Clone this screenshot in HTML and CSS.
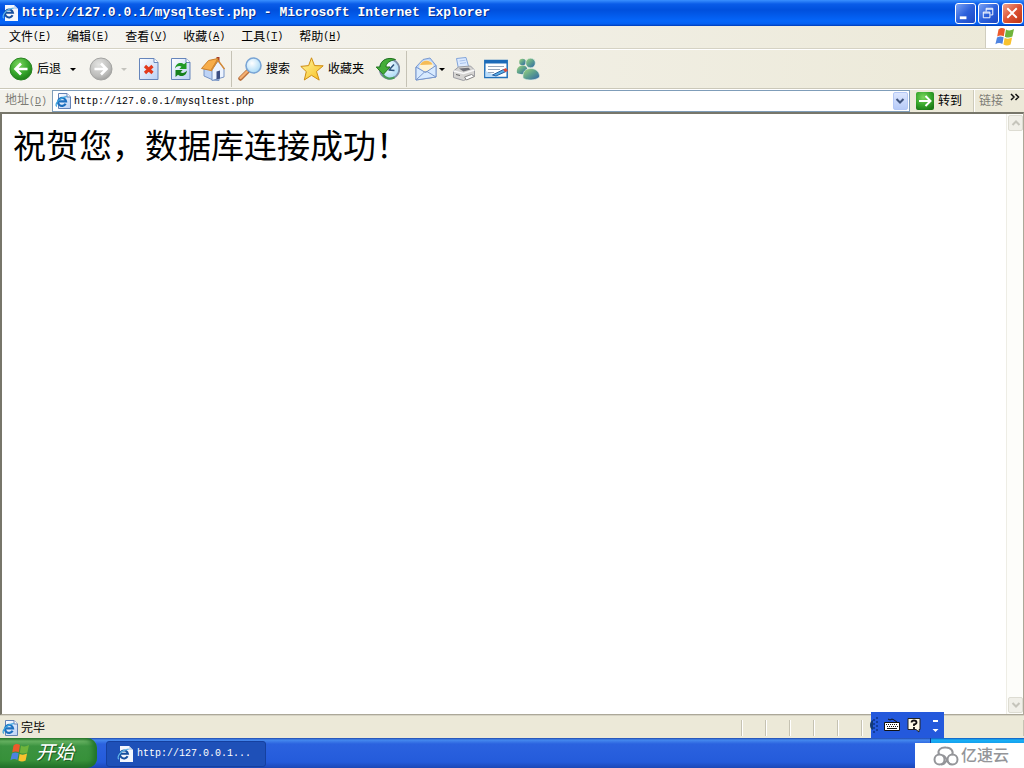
FILE: index.html
```html
<!DOCTYPE html>
<html lang="zh-CN">
<head>
<meta charset="utf-8">
<title>http://127.0.0.1/mysqltest.php - Microsoft Internet Explorer</title>
<link rel="stylesheet" href="styles.css">
</head>
<body>
<svg class="defs" aria-hidden="true">
  <defs>
    <linearGradient id="paper" x1="0" y1="0" x2="1" y2="1"><stop offset="0" stop-color="#fff"/><stop offset="1" stop-color="#b9d0f5"/></linearGradient>
    <radialGradient id="green" cx=".4" cy=".3" r=".75"><stop offset="0" stop-color="#7cd65f"/><stop offset=".6" stop-color="#35a52a"/><stop offset="1" stop-color="#1c7a17"/></radialGradient>
    <radialGradient id="grey" cx=".4" cy=".3" r=".75"><stop offset="0" stop-color="#e4e4e2"/><stop offset=".7" stop-color="#bcbcba"/><stop offset="1" stop-color="#9c9c9a"/></radialGradient>
    <radialGradient id="glass" cx=".4" cy=".35" r=".7"><stop offset="0" stop-color="#fff"/><stop offset="1" stop-color="#a5d8f6"/></radialGradient>
    <linearGradient id="star" x1="0" y1="0" x2="1" y2="1"><stop offset="0" stop-color="#fff7a0"/><stop offset="1" stop-color="#f8bd1c"/></linearGradient>
    <linearGradient id="person" x1="0" y1="0" x2="1" y2="1"><stop offset="0" stop-color="#a3d67d"/><stop offset=".5" stop-color="#5b9f8e"/><stop offset="1" stop-color="#2f62a8"/></linearGradient>
    <symbol id="ie" viewBox="0 0 16 16">
      <path d="M3.500 .5h8.500l3.500 3.500v11.500h-12z" fill="url(#paper)" stroke="#6482b5"/>
      <path d="M12 .5v3.500h3.500" fill="#fff" stroke="#6482b5"/>
      <path d="M10.600 10.800A4 4 0 1 1 11 8.300H3.800" fill="none" stroke="#1d6fbe" stroke-width="2.200"/>
      <path d="M1.800 13.500C-.8 11.500 4 4.500 11.800 3.600" fill="none" stroke="#3ca3dd" stroke-width="1.300"/>
    </symbol>
    <symbol id="ie-light" viewBox="0 0 16 16">
      <path d="M3 0h9l4 4v12H3z" fill="#f4f7fd"/>
      <path d="M12 0v4h4" fill="#c9d6ec"/>
      <path d="M10.600 10.300A4 4 0 1 1 11 7.800H3.800" fill="none" stroke="#164f9d" stroke-width="2"/>
      <path d="M1.800 13.200C-.8 11 4 4 11.800 3.200" fill="none" stroke="#5fb4ea" stroke-width="1.200"/>
    </symbol>
    <symbol id="flag" viewBox="0 0 20 20">
      <path d="M3.500 2.500Q6.500 0 10 2L8.800 9.200Q5.500 7.500 2.200 9.400z" fill="#ec5a2b"/>
      <path d="M11 2.500Q14.500 4.500 19 2L17.400 9.500Q13.500 11.500 9.800 9.700z" fill="#6fb43b"/>
      <path d="M2 10.400Q5.200 8.600 8.600 10.300L7.400 17Q4 15 .4 17.200z" fill="#4d83e0"/>
      <path d="M9.600 10.900Q13 12.700 17.100 10.600L15.600 17.600Q12 19.600 8.400 17.600z" fill="#f8c22e"/>
    </symbol>
  </defs>
</svg>

<div class="window">
  <header class="titlebar">
    <svg class="ico16"><use href="#ie-light"/></svg>
    <span class="title">http://127.0.0.1/mysqltest.php - Microsoft Internet Explorer</span>
    <button class="winbtn" aria-label="最小化"><svg viewBox="0 0 20 20"><path d="M4 14.500h7" stroke="#fff" stroke-width="3"/></svg></button>
    <button class="winbtn" aria-label="还原"><svg viewBox="0 0 20 20" fill="none" stroke="#fff"><path d="M7.500 8V4.500h7v7H12M7.500 5.500h7M4.500 9.500h7"/><path d="M4.500 8.500h7v6h-7z"/></svg></button>
    <button class="winbtn close" aria-label="关闭"><svg viewBox="0 0 20 20"><path d="M4.500 4.500l10 10M14.500 4.500l-10 10" stroke="#fff" stroke-width="2"/></svg></button>
  </header>

  <div class="menurow">
    <nav class="menus">
      <button>文件<span class="key">(<u>F</u>)</span></button>
      <button>编辑<span class="key">(<u>E</u>)</span></button>
      <button>查看<span class="key">(<u>V</u>)</span></button>
      <button>收藏<span class="key">(<u>A</u>)</span></button>
      <button>工具<span class="key">(<u>T</u>)</span></button>
      <button>帮助<span class="key">(<u>H</u>)</span></button>
    </nav>
    <div class="brand"><svg class="ico20"><use href="#flag"/></svg></div>
  </div>

  <div class="toolbar">
    <div class="group nav">
      <button class="tool"><svg class="ico24" viewBox="0 0 24 24"><circle cx="12" cy="12" r="11" fill="url(#green)" stroke="#2b8423"/><path d="M18.500 12H7M12 6.500L6.500 12l5.500 5.500" fill="none" stroke="#fff" stroke-width="2.600"/></svg>后退</button>
      <button class="drop" aria-label="后退列表"></button>
      <button class="tool forward" aria-label="前进"><svg class="ico24" viewBox="0 0 24 24"><circle cx="12" cy="12" r="11" fill="url(#grey)" stroke="#a4a4a2"/><path d="M5.500 12H17M12 6.500l5.500 5.500-5.500 5.500" fill="none" stroke="#fff" stroke-width="2.600"/></svg></button>
      <button class="drop off" aria-label="前进列表"></button>
    </div>
    <div class="group pages">
      <button class="tool" aria-label="停止"><svg class="ico24" viewBox="0 0 24 24"><path d="M2.500 1.500h14.500l4 4v17H2.500z" fill="url(#paper)" stroke="#6685bb"/><path d="M17 1.500v4h4" fill="#fff" stroke="#6685bb"/><path d="M8 9l7.500 7M15.500 9l-7.500 7" stroke="#e33a1c" stroke-width="3.200"/></svg></button>
      <button class="tool" aria-label="刷新"><svg class="ico24" viewBox="0 0 24 24"><path d="M2.500 1.500h14.500l4 4v17H2.500z" fill="url(#paper)" stroke="#6685bb"/><path d="M17 1.500v4h4" fill="#fff" stroke="#6685bb"/><path d="M6 11.500C6.500 6 12 4.500 15 7.300L17.500 5v7h-7.200l2.200-2.200C10.500 8.500 8 9 6 11.500z" fill="#219a26"/><path d="M18 13.500C17.500 19 12 20.500 9 17.700L6.500 20v-7h7.200l-2.200 2.200C13.500 16.500 16 16 18 13.500z" fill="#16811d"/></svg></button>
      <button class="tool" aria-label="主页"><svg class="ico24" viewBox="0 0 24 24"><path d="M15.500 0h3v6h-3z" fill="#a73c25"/><path d="M3 11L10 7l8 5v11.500l-6-.5-9-4z" fill="#bdd3f6" stroke="#7794c5"/><path d="M11 12.500L17 4l6 7.500V20l-12 3.500z" fill="#edf4ff" stroke="#7794c5"/><path d="M.5 11.500L7.500 3.500 17 1.500l-7 12z" fill="#f7ad4a" stroke="#cb7f29"/><path d="M10 14L16.800 3l6.700 9" fill="none" stroke="#d58a35" stroke-width="1.500"/><path d="M15.500 14.500l3.500-1v8L15.500 22.500z" fill="#3c4f83"/></svg></button>
    </div>
    <div class="group common">
      <button class="tool"><svg class="ico24" viewBox="0 0 24 24"><path d="M2.500 21.500L9.500 14.500" stroke="#b76e3c" stroke-width="4.500" stroke-linecap="round"/><path d="M2.500 21L9 14.500" stroke="#f5b071" stroke-width="2.400" stroke-linecap="round"/><circle cx="15.500" cy="8.500" r="7.500" fill="url(#glass)" stroke="#7aa5d5" stroke-width="1.600"/></svg>搜索</button>
      <button class="tool"><svg class="ico24" viewBox="0 0 24 24"><path d="M11.500.8l3 7.800 8.700.2-6.700 5.700 2.700 8.600-7.700-4.800L4.300 23l2-8.400L.8 9.400l7.800-.8z" fill="url(#star)" stroke="#cf8c12" stroke-linejoin="round"/></svg>收藏夹</button>
      <button class="tool history" aria-label="历史"><svg class="ico24" viewBox="0 0 24 24"><circle cx="13.500" cy="12" r="9.800" fill="url(#glass)" stroke="#7e8ea8" stroke-width="1.800"/><path d="M13 13l5-5.500M12.500 13l6 .5" stroke="#315781" stroke-width="1.600"/><path d="M19.500 2.500C12-.5 4.500 3 4 10H.2l7 7.500 6.800-7.500H10C10 6 14 3.500 19.500 2.500z" fill="#43ad38" stroke="#22741f"/><path d="M7 17.500c2 4 7 5 11.500 3" fill="none" stroke="#489d58" stroke-width="2"/></svg></button>
    </div>
    <div class="group extras">
      <button class="tool" aria-label="邮件"><svg class="ico24" viewBox="0 0 24 24"><path d="M2 10L9 2.500l7-1.500 6 7.500V20L2 23z" fill="#bcd6fa" stroke="#7c9bcf"/><path d="M5 10.500C6 3 16 0 19.500 8v4L12 16z" fill="#fff3d4"/><path d="M6 8C8 3 16 2 18.500 7.500z" fill="#f6bc56"/><path d="M2 10l9.500 5.500L22 8.500V20L2 23z" fill="#d8eaff" stroke="#7896cc"/><path d="M2 23l8.500-8 2.500-.5 9 5.500" fill="none" stroke="#7896cc"/></svg></button>
      <button class="drop" aria-label="邮件列表"></button>
      <button class="tool print" aria-label="打印"><svg class="ico24" viewBox="0 0 24 24"><path d="M6.500 12L4.500 1.500l9.500-1 3 10.500z" fill="#dceaff" stroke="#82a4d9"/><path d="M7.500 4l6-.8M8 6.500l6-.8" stroke="#a9c2ec"/><path d="M1.500 14l5-4 12-1 4 4v6l-11 4.500-10-3z" fill="#d5d4d2" stroke="#9c9da3"/><path d="M1.500 14l10 2.500 11-3.500" fill="none" stroke="#f8f8f8" stroke-width="1.500"/><path d="M7 11.500l9.500-.8 2 1.800-7 2z" fill="#6f7078"/><path d="M12.500 20l7-2.500 3 2-8 3.500z" fill="#fff" stroke="#888"/><path d="M4 17.500l4 1" stroke="#666"/></svg></button>
      <button class="tool" aria-label="编辑"><svg class="ico24" viewBox="0 0 24 24"><path d="M.8 3.500h22.400v17H.8z" fill="#fff" stroke="#2170ba" stroke-width="1.500"/><path d="M1 3h22v3.500H1z" fill="#1d6bb8"/><path d="M15 20H1.500v-6z" fill="#b9dcfa"/><path d="M4 9.500h16M4 12.500h12M4 15.500h6" stroke="#98a8bc"/><path d="M8.500 18l11-5.500 2.500 2-10 4.500z" fill="#5aaee6" stroke="#295fa0"/><path d="M19 12.500l3-1.500 2 3-3 1z" fill="#dc4c39"/></svg></button>
      <button class="tool" aria-label="Messenger"><svg class="ico24" viewBox="0 0 24 24" fill="url(#person)"><circle cx="6.500" cy="5" r="3.300"/><path d="M1 16c-1-5 2-7.500 6-7.500 3 0 5 2 4.500 7.500-3 1.500-8 1.500-10.500 0z"/><circle cx="14.500" cy="6" r="4.800" stroke="#dff0ea" stroke-width=".6"/><path d="M7 21c-.5-6 2-9.500 8-9.500 5 0 9 4 8.500 8.500-3 3.500-13 4-16.500 1z" stroke="#dff0ea" stroke-width=".6"/></svg></button>
    </div>
  </div>

  <form class="addressbar">
    <label for="url">地址<span class="key">(<u>D</u>)</span></label>
    <div class="urlbox">
      <svg class="ico16"><use href="#ie"/></svg>
      <input id="url" type="text" value="http://127.0.0.1/mysqltest.php">
      <button type="button" class="combo" aria-label="地址列表"><svg viewBox="0 0 10 10"><path d="M1.500 3L5 6.500 8.500 3" fill="none" stroke="#40557f" stroke-width="2"/></svg></button>
    </div>
    <button type="button" class="go"><svg class="ico18" viewBox="0 0 18 18"><rect width="18" height="18" rx="2" fill="url(#green)"/><path d="M3 9h11M9.500 4l5 5-5 5" fill="none" stroke="#fff" stroke-width="2"/></svg>转到</button>
    <button type="button" class="links">链接</button>
    <button type="button" class="more" aria-label="更多链接"><svg viewBox="0 0 10 8"><path d="M1 1l3 3-3 3M5.500 1l3 3-3 3" fill="none" stroke="#111" stroke-width="1.500"/></svg></button>
  </form>

  <div class="viewport">
    <main><h1>祝贺您，数据库连接成功！</h1></main>
    <div class="scroll">
      <button aria-label="向上滚动"><svg viewBox="0 0 10 10"><path d="M1.500 7L5 3.500 8.500 7" fill="none" stroke="#c5c4bb" stroke-width="2"/></svg></button>
      <button aria-label="向下滚动"><svg viewBox="0 0 10 10"><path d="M1.500 3L5 6.500 8.500 3" fill="none" stroke="#c5c4bb" stroke-width="2"/></svg></button>
    </div>
  </div>

  <footer class="status">
    <svg class="ico16"><use href="#ie"/></svg>
    <span class="done">完毕</span>
    <i></i><i></i><i></i><i></i><i></i><i class="zone"></i>
  </footer>

  <div class="taskbar">
    <button class="start"><svg class="ico20"><use href="#flag"/></svg>开始</button>
    <button class="task"><svg class="ico16"><use href="#ie-light"/></svg>http://127.0.0.1...</button>
    <div class="tray"></div>
    <div class="langbar">
      <svg class="grip" viewBox="0 0 8 24"><path d="M0 12q0-4 3-5v10q-3-1-3-5" fill="#123a78"/><path d="M4 6v14M7 4v16" stroke="#123c9c" stroke-width="2" stroke-dasharray="2 2"/></svg>
      <button aria-label="键盘"><svg class="ico16" viewBox="0 0 16 16"><path d="M4 2l2 1 2-1 2 1 3 2" fill="none" stroke="#111"/><path d="M.5 5.500h15v8H.5z" fill="#fff" stroke="#111"/><path d="M2 7.500h12M3 9.500h11" stroke="#111" stroke-dasharray="1 1"/><path d="M3 11.500h10" stroke="#111"/></svg></button>
      <button aria-label="帮助"><svg class="ico16" viewBox="0 0 16 16"><path d="M2 1.500h12v11h-1V15l-3-2.500H2z" fill="#fffce8" stroke="#222"/><path d="M5.500 5.500Q5.500 3.500 8 3.500t2.500 2Q10.500 7 8 7.500V9M8 10v2" fill="none" stroke="#111" stroke-width="1.800"/></svg></button>
      <button aria-label="选项"><svg class="ico16" viewBox="0 0 16 16"><path d="M5 3h5v2H5zM4.500 12h6l-3 3z" fill="#fff"/></svg></button>
    </div>
    <div class="watermark"><svg viewBox="0 0 26 20" fill="none" stroke="#949599" stroke-width="2"><path d="M6 8.500C4 4 8 1 13 1.500c5 0 8 4 6 7.500"/><circle cx="6.500" cy="13.500" r="5"/><circle cx="19.500" cy="13.500" r="5"/><path d="M9.500 9.500c4.500 0 4 9 9 9M8 18.500c4.500 0 5-3.500 6.500-6"/></svg>亿速云</div>
  </div>
</div>
</body>
</html>
```

FILE: styles.css
```css
* { box-sizing: border-box; }
body {
  margin: 0;
  font: 12px/16px "Liberation Sans", "Noto Sans CJK SC", sans-serif;
  color: #000;
}
button {
  display: flex;
  align-items: center;
  flex: none;
  margin: 0;
  padding: 0;
  border: 0;
  background: none;
  color: inherit;
  font: inherit;
  white-space: nowrap;
}
svg { display: block; flex: none; }
.defs { position: absolute; width: 0; height: 0; }
.ico16 { width: 16px; height: 16px; }
.ico18 { width: 18px; height: 18px; }
.ico20 { width: 20px; height: 20px; }
.ico24 { width: 24px; height: 24px; }
.key { font: 10px/16px "Liberation Mono", monospace; }

.window {
  display: flex;
  flex-direction: column;
  height: 100vh;
  background: #ece9d8;
}

.titlebar {
  display: flex;
  align-items: center;
  flex: none;
  height: 26px;
  padding: 0 1px 0 2px;
  gap: 2px;
  background: linear-gradient(#3a90ff 0, #0a5ce8 4px, #0050dd 10px, #0566fa 21px, #0560f0 24px, #003bb5 26px);
}
.title {
  flex: 1;
  padding-left: 2px;
  color: #fff;
  font: bold 13px/16px "Liberation Mono", monospace;
  text-shadow: 1px 1px #0a2f8c;
  white-space: nowrap;
  overflow: hidden;
}
.winbtn {
  width: 21px;
  height: 21px;
  border: 1px solid #fff;
  border-radius: 3px;
  background: linear-gradient(135deg, #7ba2f4, #2c61dc 50%, #1d48c4);
}
.winbtn.close { margin-left: 1px; background: linear-gradient(135deg, #f0a38c, #dc5234 50%, #bd3512); }

.menurow {
  display: flex;
  flex: none;
  height: 23px;
  border-bottom: 1px solid #d5d2c4;
  background: linear-gradient(90deg, #f6f5f2, #ece9d8);
}
.menus {
  display: flex;
  flex: 1;
  gap: 16px;
  padding-left: 9px;
}
.brand {
  display: flex;
  align-items: center;
  justify-content: center;
  width: 39px;
  border-left: 1px solid #d0cdbf;
  background: #fff;
}

.toolbar {
  display: flex;
  flex: none;
  height: 40px;
  padding: 1px 0;
  border-top: 1px solid #fff;
  border-bottom: 1px solid #cbc8b9;
  background: linear-gradient(90deg, #f6f5f1, #ece9d8);
}
.group { display: flex; align-items: center; }
.tool { gap: 4px; }
.nav { padding-left: 9px; }
.pages { gap: 8px; padding: 0 6px 0 2px; }
.common { gap: 10px; padding: 0 6px; border-left: 1px solid #c5c2b5; }
.extras { gap: 8px; padding-left: 7px; border-left: 1px solid #c5c2b5; }
.extras .drop { width: 8px; margin: 0 -2px 0 -8px; }
.history { margin-left: 2px; }
.drop { justify-content: center; width: 24px; height: 24px; }
.drop::after {
  content: "";
  border: 3px solid transparent;
  border-top-color: #000;
  border-bottom: 0;
}
.forward { margin-left: 4px; }
.forward + .drop { width: 22px; }
.drop.off::after { border-top-color: #c4c3bd; }

.addressbar {
  display: flex;
  align-items: center;
  flex: none;
  height: 23px;
  margin: 0;
  padding-left: 5px;
  border-top: 1px solid #fff;
  background: linear-gradient(90deg, #f3f2ec, #ece9d8);
}
.addressbar label { width: 47px; color: #7d7c75; white-space: nowrap; }
.urlbox {
  display: flex;
  align-items: center;
  flex: 1;
  min-width: 0;
  height: 22px;
  padding: 1px 1px 1px 2px;
  border: 1px solid #7f9db9;
  background: #fff;
}
.urlbox input {
  flex: 1;
  min-width: 0;
  padding: 1px 3px 0;
  border: 0;
  outline: 0;
  background: none;
  color: #000;
  font: 10px/16px "Liberation Mono", monospace;
}
.combo {
  justify-content: center;
  width: 15px;
  height: 18px;
  border: 1px solid #b4c8f6;
  border-radius: 2px;
  background: linear-gradient(#dce6fe, #b7cbf8);
}
.combo svg, .scroll svg { width: 10px; height: 10px; }
.go { gap: 4px; padding: 0 12px 0 6px; }
.links {
  height: 22px;
  padding: 0 7px 0 4px;
  border-left: 1px solid #fff;
  box-shadow: -1px 0 #cdcaba;
  color: #7d7c75;
}
.more { align-self: flex-start; width: 14px; padding-top: 3px; }
.more svg { width: 10px; height: 8px; }

.viewport {
  display: flex;
  flex: 1;
  min-height: 0;
  border: 1px solid #aca899;
  border-top: 2px solid #77766a;
  border-left: 2px solid #77766a;
  background: #fff;
}
main { flex: 1; min-width: 0; padding: 8px 11px; }
h1 {
  margin: 0;
  font: 400 33px/44px "Noto Sans CJK SC", sans-serif;
}
.scroll {
  display: flex;
  flex-direction: column;
  justify-content: space-between;
  width: 17px;
  padding: 1px;
  border-left: 1px solid #eeede5;
  background: #fdfdfa;
}
.scroll button {
  justify-content: center;
  width: 15px;
  height: 16px;
  border: 1px solid #dddcd2;
  border-radius: 2px;
  background: #f0efe8;
}

.status {
  display: flex;
  align-items: center;
  flex: none;
  height: 23px;
  padding: 2px 0 0 2px;
  border-top: 1px solid #d6d3c4;
}
.done { flex: 1; padding-left: 3px; }
.status i {
  width: 24px;
  height: 16px;
  border-left: 1px solid #c5c2b2;
  box-shadow: inset 1px 0 #fff;
}
.status .zone { width: 163px; border-right: 1px solid #c5c2b2; }

.taskbar {
  position: relative;
  display: flex;
  flex: none;
  height: 30px;
  background: linear-gradient(#1f48ad 0, #4589ee 2px, #2b62df 6px, #245bdb 24px, #1c47b6 30px);
}
.start {
  gap: 6px;
  width: 97px;
  padding-left: 10px;
  border-radius: 0 10px 10px 0;
  background: linear-gradient(#2d7a2d 0, #6bb565 3px, #3c9340 8px, #37913a 22px, #23702a 30px);
  box-shadow: inset -4px 0 5px #21742a;
  color: #fff;
  font-size: 19px;
  font-style: italic;
  line-height: 24px;
  text-shadow: 1px 1px #205c25;
}
.task {
  gap: 4px;
  width: 160px;
  height: 26px;
  margin: 3px 0 0 9px;
  padding-left: 10px;
  border: 1px solid #15409f;
  border-radius: 3px;
  background: #1e50b8;
  color: #fff;
  font: 10px/16px "Liberation Mono", monospace;
}
.tray {
  width: 94px;
  margin-left: auto;
  border-left: 1px solid #12389a;
  background: linear-gradient(#1157be 0, #19b0f4 2px, #1290e8 8px);
}
.langbar {
  position: absolute;
  right: 80px;
  bottom: 30px;
  display: flex;
  align-items: center;
  gap: 6px;
  width: 73px;
  height: 26px;
  background: #2459dc;
}
.grip { width: 8px; height: 24px; margin-left: -1px; }
.watermark {
  position: absolute;
  right: 0;
  bottom: 0;
  display: flex;
  align-items: center;
  gap: 2px;
  width: 109px;
  height: 25px;
  padding-left: 18px;
  background: #fff;
  color: #949599;
  font-size: 16px;
  font-weight: 500;
  line-height: 24px;
  white-space: nowrap;
}
.watermark svg { width: 26px; height: 20px; }
```
